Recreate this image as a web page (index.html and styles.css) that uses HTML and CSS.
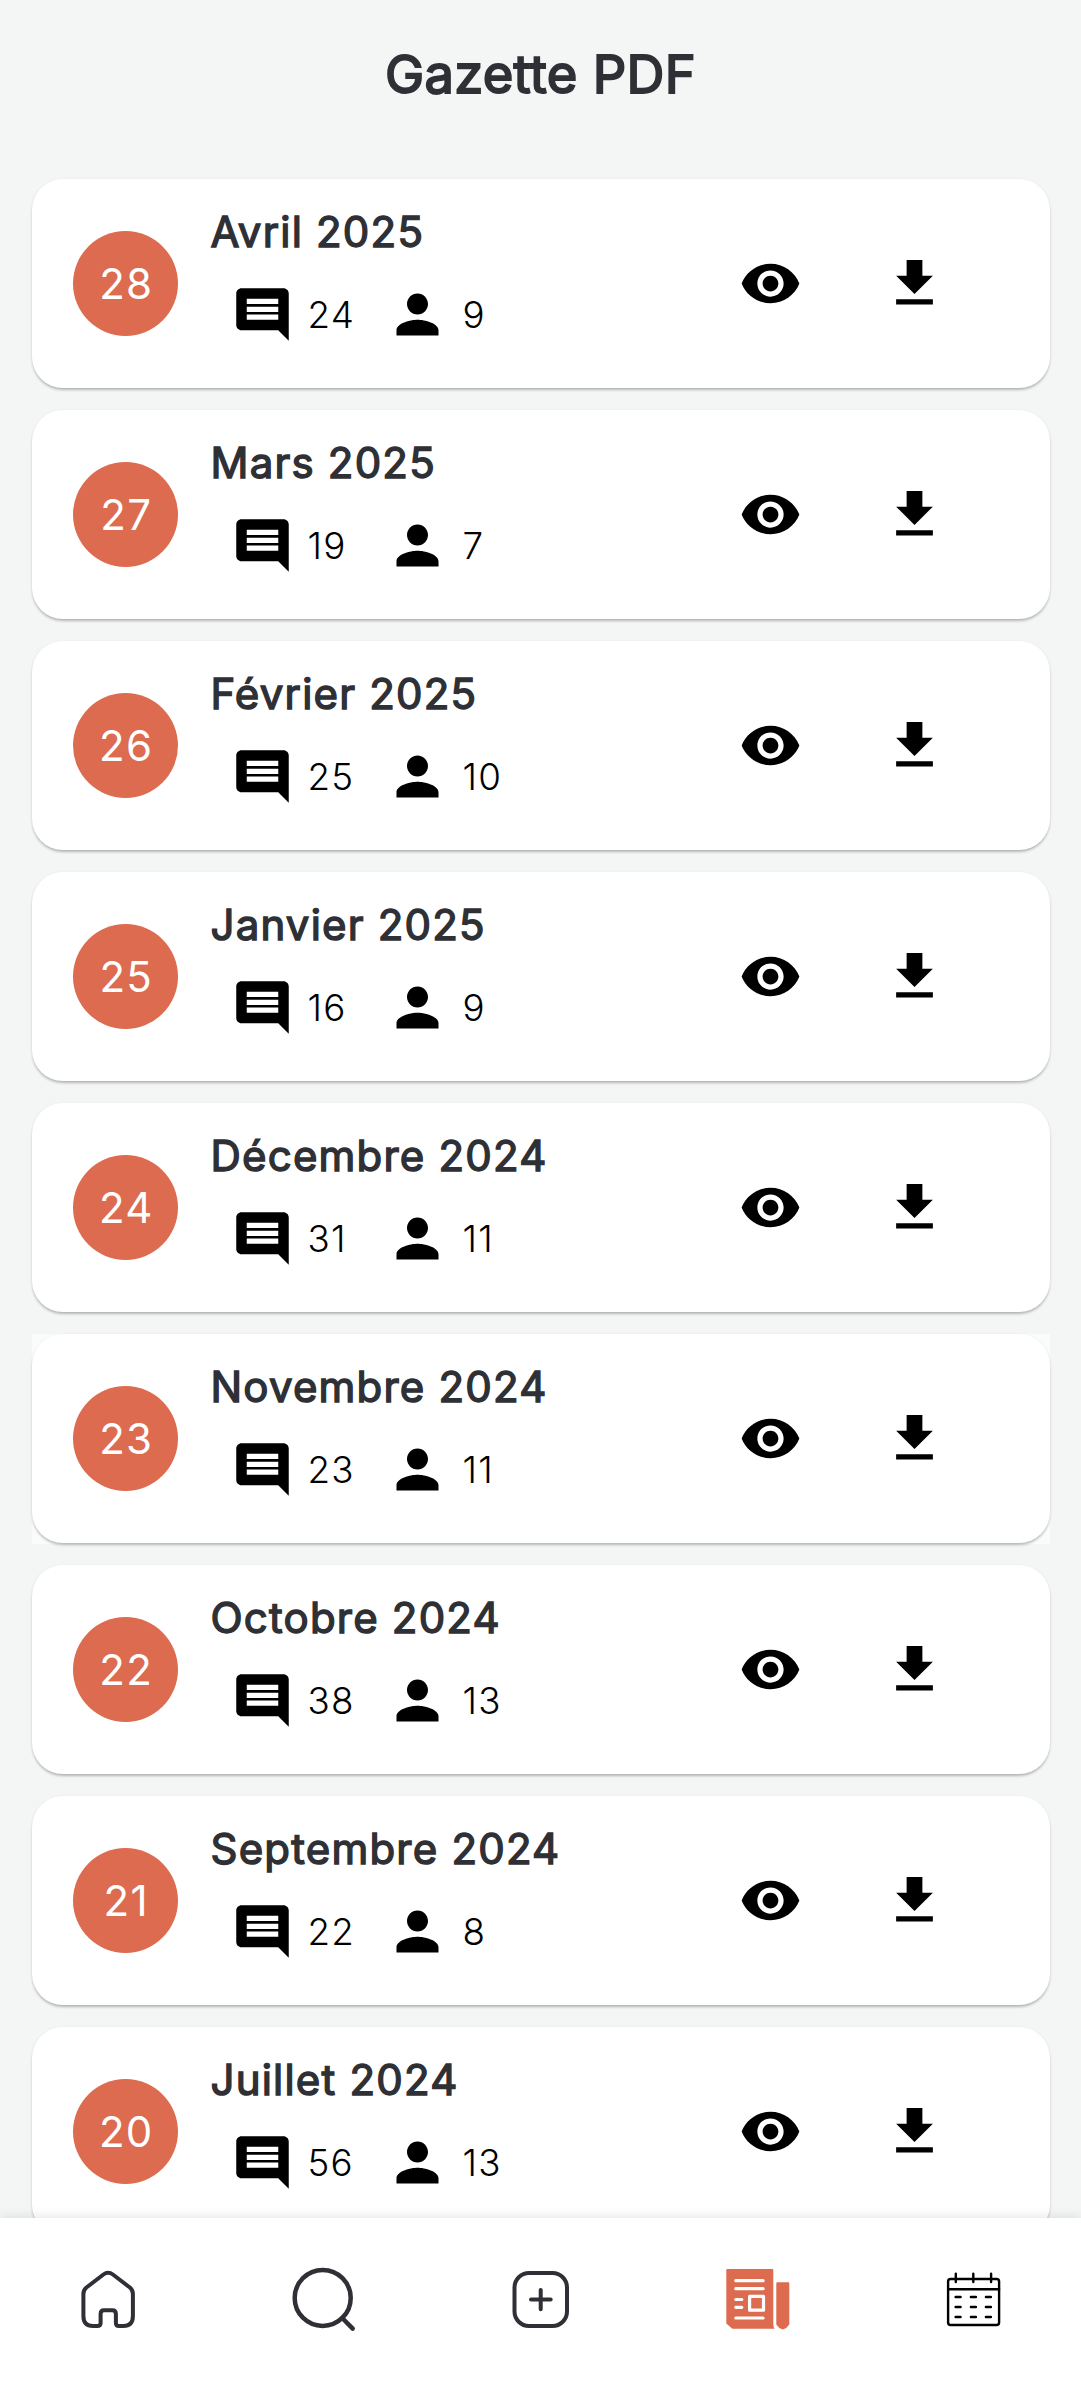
FILE: index.html
```html
<!DOCTYPE html>
<html lang="fr">
<head>
<meta charset="utf-8">
<title>Gazette PDF</title>
<link rel="stylesheet" href="styles.css">
</head>
<body>
<svg class="sprite" aria-hidden="true">
  <symbol id="comment" viewBox="0 0 24 24"><path d="M20 2H4c-1.100 0-2 .9-2 2v12c0 1.100.9 2 2 2h14l4 4V4c0-1.100-.9-2-2-2zm-2 12H6v-2h12v2zm0-3H6V9h12v2zm0-3H6V6h12v2z"/></symbol>
  <symbol id="person" viewBox="0 0 24 24"><path d="M12 12c2.210 0 4-1.790 4-4s-1.790-4-4-4-4 1.790-4 4 1.790 4 4 4zm0 2c-2.670 0-8 1.340-8 4v2h16v-2c0-2.660-5.330-4-8-4z"/></symbol>
  <symbol id="eye" viewBox="0 0 24 24"><path d="M12 4.500C7 4.500 2.730 7.610 1 12c1.730 4.390 6 7.500 11 7.500s9.270-3.110 11-7.500c-1.730-4.390-6-7.500-11-7.500zM12 17c-2.760 0-5-2.240-5-5s2.240-5 5-5 5 2.240 5 5-2.240 5-5 5zm0-8c-1.660 0-3 1.340-3 3s1.340 3 3 3 3-1.340 3-3-1.340-3-3-3z"/></symbol>
  <symbol id="download" viewBox="0 0 24 24"><path d="M19 9h-4V3H9v6H5l7 7 7-7zM5 18v2h14v-2H5z"/></symbol>
</svg>
<header class="header"><h1 class="title">Gazette PDF</h1></header>
<main class="list" id="list"></main>
<nav class="nav">
  <a class="tab"><svg class="tab-icon line" viewBox="-1.900 0 80 80"><path d="M13.500 34Q13.500 30 16.500 27.500L33.500 14.500Q38.300 11 43 14.500L60 27.500Q63 30 63 34V56Q63 66 53.500 66H49Q46 66 46 63V54Q46 50.300 42.500 50.300H34Q30.700 50.300 30.700 54V63Q30.700 66 27.500 66H23Q13.500 66 13.500 56Z"/></svg></a>
  <a class="tab"><svg class="tab-icon line bold" viewBox="-.7 0 80 80"><circle cx="38" cy="37.900" r="28"/><path d="M57.500 58l10.500 10.700"/></svg></a>
  <a class="tab"><svg class="tab-icon line" viewBox="0 0 80 80"><rect x="14.500" y="13" width="52.500" height="53" rx="14.500"/><path d="M40.700 30v19.300M31 39.500h19.700"/></svg></a>
  <a class="tab"><svg class="tab-icon" viewBox="-1.300 0 80 80">
    <path class="accent" d="M9 9H54Q55 9 55 10V64Q55 67 56.300 68.700H14L8 63.500V10Q8 9 9 9ZM59 22.300H70Q71 22.300 71 23.300V64.500Q69 68 64.500 69.500Q60 68 58 64.500V23.300Q58 22.300 59 22.300Z"/>
    <path class="cutout" d="M17.500 20.700H44.800M17.500 28.700H44.800M17.500 58H44.800M17.500 39.500H23.500M17.500 47.300H23.500M31.300 36.300H45.200V50.200H31.300Z"/></svg></a>
  <a class="tab"><svg class="tab-icon calendar" viewBox="-5.100 0 80 80"><rect x="10" y="19" width="51" height="46" rx="2.500"/><path d="M10 29.300H61M17.700 13.700V22M35.200 13.700V22M53 13.700V22"/><path d="M17.500 37h5M32.800 37h5M47.800 37h5M17.500 47h5M32.800 47h5M47.800 47h5M17.500 57h5M32.800 57h5M47.800 57h5"/></svg></a>
</nav>
<script src="app.js"></script>
</body>
</html>
```
FILE: styles.css
```css
* { box-sizing: border-box; }
body { margin: 0; height: 2401px; display: flex; flex-direction: column; background: #f4f6f6; font-family: Inter, sans-serif; overflow: hidden; }
.sprite { display: none; }
.header { flex: none; height: 168px; padding-top: 41px; text-align: center; }
.title { margin: 0; font-size: 52.500px; line-height: 67px; font-weight: 400; letter-spacing: .3px; -webkit-text-stroke: 1.900px #2e3035; color: #2e3035; }
.list { flex: 1; min-height: 0; overflow: hidden; padding: 10.500px 31px 0 31.500px; display: flex; flex-direction: column; gap: 21px; }
.slot { flex: none; height: 210px; }
.slot.pressed { background: #fafbfb; }
.card { height: 209.500px; border-radius: 31px; background: #fff; box-shadow: 0 3px 3px -1px rgba(0,0,0,.2), 0 1px 3px rgba(0,0,0,.12); display: flex; align-items: center; padding: 0 104px 0 41.500px; }
.badge { flex: none; width: 105px; height: 105px; border-radius: 50%; background: #dc6b4f; color: #fff; display: flex; align-items: center; justify-content: center; font-size: 42px; letter-spacing: 1.300px; padding-left: 1.500px; }
.info { flex: 1; align-self: stretch; margin-left: 32.500px; padding-top: 27px; }
.month { margin: 0; font-size: 42px; line-height: 51px; font-weight: 400; -webkit-text-stroke: 1.400px #2e3035; letter-spacing: 1.200px; color: #2e3035; }
.stats { display: flex; align-items: center; margin: 26.500px 0 0 20.500px; height: 63px; font-size: 36.750px; letter-spacing: 1.200px; font-weight: 300; }
.stat { display: flex; align-items: center; width: 155px; gap: 13.500px; line-height: 44px; }
.icon { width: 63px; height: 63px; flex: none; }
.actions { display: flex; gap: 81px; }
.nav { position: relative; flex: none; height: 183px; display: grid; grid-template-columns: repeat(5, 1fr); background: #fff; box-shadow: 0 0 12px rgba(0,0,0,.12); padding-top: 42px; }
.tab { display: flex; justify-content: center; height: 80px; }
.tab-icon { width: 80px; height: 80px; }
.line { fill: none; stroke: #2e3035; stroke-width: 4; stroke-linecap: round; stroke-linejoin: round; }
.line.bold { stroke-width: 4.500; }
.accent { fill: #dc6b4f; }
.cutout { fill: none; stroke: #fff; stroke-width: 3.200; stroke-linecap: round; stroke-linejoin: round; }
.calendar { fill: none; stroke: #000; stroke-width: 2.400; stroke-linecap: round; }
```
FILE: app.js
```js
const issues = [
  [28, 'Avril 2025', 24, 9], [27, 'Mars 2025', 19, 7], [26, 'Février 2025', 25, 10],
  [25, 'Janvier 2025', 16, 9], [24, 'Décembre 2024', 31, 11], [23, 'Novembre 2024', 23, 11],
  [22, 'Octobre 2024', 38, 13], [21, 'Septembre 2024', 22, 8], [20, 'Juillet 2024', 56, 13]
];
const icon = name => `<svg class="icon"><use href="#${name}"/></svg>`;
document.getElementById('list').innerHTML = issues.map(([n, month, comments, people]) => `
  <div class="slot${n === 23 ? ' pressed' : ''}"><article class="card">
    <div class="badge">${n}</div>
    <div class="info"><h2 class="month">${month}</h2>
      <div class="stats"><span class="stat">${icon('comment')}${comments}</span><span class="stat">${icon('person')}${people}</span></div>
    </div>
    <div class="actions">${icon('eye')}${icon('download')}</div>
  </article></div>`).join('');
```
